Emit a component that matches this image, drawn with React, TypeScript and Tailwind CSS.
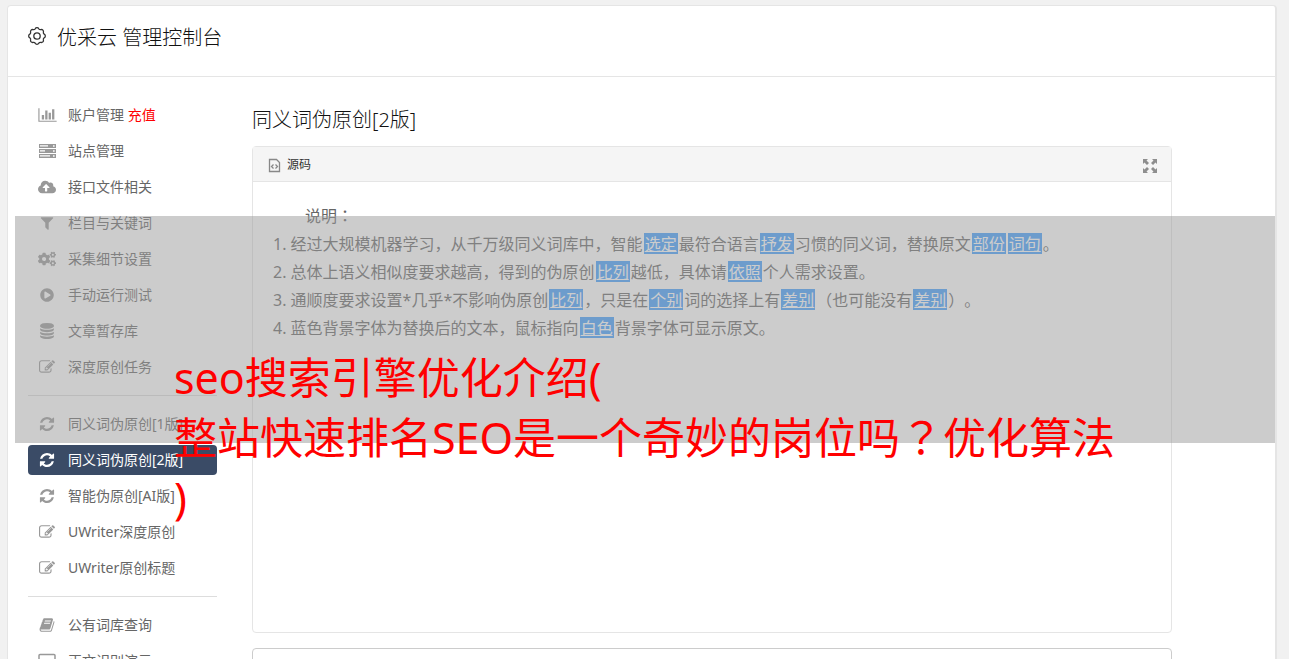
import type { ReactNode } from "react";
import { FaCloudUploadAlt, FaCogs, FaPlayCircle } from "react-icons/fa";

type GlyphProps = {
  viewBox: string;
  d: string;
};

function Glyph({ viewBox, d }: GlyphProps) {
  return (
    <svg viewBox={viewBox} className="size-4" fill="currentColor" aria-hidden="true">
      <path d={d} />
    </svg>
  );
}

const chart = (
  <svg viewBox="0 0 2048 1792" className="h-4 w-[19px]" fill="currentColor" aria-hidden="true">
    <path d="M640 896v512h-256v-512h256zm384-512v1024h-256v-1024h256zm1024 1152v128h-2048v-1536h128v1408h1920zm-640-896v768h-256v-768h256zm384-384v1152h-256v-1152h256z" />
  </svg>
);

const server = (
  <svg viewBox="0 0 17 14" className="h-[14px] w-[17px]" fill="currentColor" aria-hidden="true">
    <path
      fillRule="evenodd"
      d="M0 0h17v4H0zM1 1v.8h8V1zM1 2.4v.6h8v-.6zM14 1.2v1.6h1.6V1.2zM0 5h17v4H0zM1 6v.8h5V6zM1 7.4v.6h5v-.6zM14 6.2v1.6h1.6V6.2zM0 10h17v4H0zM1 11v.8h10V11zM1 12.4v.6h10v-.6zM14 11.2v1.6h1.6v-1.6z"
    />
  </svg>
);

const filter = (
  <Glyph
    viewBox="0 0 1792 1792"
    d="M1595 295q17 41-14 70l-493 493v742q0 42-39 59-13 5-25 5-27 0-45-19l-256-256q-19-19-19-45v-486l-493-493q-31-29-14-70 17-39 59-39h1280q42 0 59 39z"
  />
);

const database = (
  <Glyph
    viewBox="0 0 1792 1792"
    d="M896 768q237 0 443-43t325-127v170q0 69-103 128t-280 93.5-385 34.5-385-34.5-280-93.5-103-128v-170q119 84 325 127t443 43zm0 768q237 0 443-43t325-127v170q0 69-103 128t-280 93.5-385 34.5-385-34.5-280-93.5-103-128v-170q119 84 325 127t443 43zm0-384q237 0 443-43t325-127v170q0 69-103 128t-280 93.5-385 34.5-385-34.5-280-93.5-103-128v-170q119 84 325 127t443 43zm0-1152q208 0 385 34.5t280 93.5 103 128v128q0 69-103 128t-280 93.5-385 34.5-385-34.5-280-93.5-103-128v-128q0-69 103-128t280-93.5 385-34.5z"
  />
);

const edit = (
  <Glyph
    viewBox="0 0 1792 1792"
    d="M888 1184l116-116-152-152-116 116v56h96v96h56zm440-720q-16-16-33 1l-350 350q-17 17-1 33t33-1l350-350q17-17 1-33zm80 594v190q0 119-84.5 203.5t-203.5 84.5h-832q-119 0-203.5-84.5t-84.5-203.5v-832q0-119 84.5-203.5t203.5-84.5h832q63 0 117 25 15 7 18 23 3 17-9 29l-49 49q-14 14-32 8-23-6-45-6h-832q-66 0-113 47t-47 113v832q0 66 47 113t113 47h832q66 0 113-47t47-113v-126q0-13 9-22l64-64q15-15 35-7t20 29zm-96-738l288 288-672 672h-288v-288zm444 132l-92 92-288-288 92-92q28-28 68-28t68 28l152 152q28 28 28 68t-28 68z"
  />
);

const refresh = (
  <Glyph
    viewBox="-100 -100 1736 1736"
    d="M1511 928q0 5-1 7-64 268-268 434.5t-478 166.5q-146 0-282.5-55t-243.5-157l-129 129q-19 19-45 19t-45-19-19-45v-448q0-26 19-45t45-19h448q26 0 45 19t19 45-19 45l-137 137q71 66 161 102t187 36q134 0 250-65t186-179q11-17 53-117 8-23 30-23h192q13 0 22.5 9.5t9.5 22.5zm25-800v448q0 26-19 45t-45 19h-448q-26 0-45-19t-19-45 19-45l138-138q-148-137-349-137-134 0-250 65t-186 179q-11 17-53 117-8 23-30 23h-199q-13 0-22.5-9.5t-9.5-22.5v-7q65-268 270-434.5t480-166.5q146 0 284 55.5t245 156.5l130-129q19-19 45-19t45 19 19 45z"
  />
);

const book = (
  <Glyph
    viewBox="0 0 1792 1792"
    d="M1703 478q40 57 18 129l-275 906q-19 64-76.5 107.5t-122.5 43.5h-923q-77 0-148.5-53.5t-99.5-131.5q-24-67-2-127 0-4 3-27t4-37q1-8-3-21.5t-3-19.5q2-11 8-21t16.5-23.5 16.5-23.5q23-38 45-91.5t30-91.5q3-10 .5-30t-.5-28q3-11 17-28t17-23q21-36 42-92t25-90q1-9-2.5-32t.5-28q4-13 22-30.5t22-22.5q19-26 42.5-84.5t27.5-96.5q1-8-3-25.5t-2-26.5q2-8 9-18t18-23 17-21q8-12 16.5-30.5t15-35 16-36 19.5-32 26.5-23.5 36-11.5 47.5 5.5l-1 3q38-9 51-9h761q74 0 114 56t18 130l-274 906q-36 119-71.5 153.5t-128.5 34.5h-869q-27 0-38 15-11 16-1 43 24 70 144 70h923q29 0 56-15.5t35-41.5l300-987q7-22 5-57 38 15 59 43zm-1064 2q-4 13 2 22.5t20 9.5h608q13 0 25.5-9.5t16.5-22.5l21-64q4-13-2-22.5t-20-9.5h-608q-13 0-25.5 9.5t-16.5 22.5zm-83 256q-4 13 2 22.5t20 9.5h608q13 0 25.5-9.5t16.5-22.5l21-64q4-13-2-22.5t-20-9.5h-608q-13 0-25.5 9.5t-16.5 22.5z"
  />
);

const laptop = (
  <svg viewBox="0 0 18 16" className="h-4 w-[18px]" fill="none" stroke="currentColor" aria-hidden="true">
    <rect x="1" y="1.5" width="16" height="10" rx="1" strokeWidth="1.5" />
    <path d="M0 14h18" strokeWidth="2" />
  </svg>
);

type MenuItem = {
  label: string;
  icon: ReactNode;
  badge?: string;
  active?: boolean;
};

const groups: MenuItem[][] = [
  [
    { label: "账户管理", icon: chart, badge: "充值" },
    { label: "站点管理", icon: server },
    { label: "接口文件相关", icon: <FaCloudUploadAlt className="size-[18px]" /> },
    { label: "栏目与关键词", icon: filter },
    { label: "采集细节设置", icon: <FaCogs className="size-[18px]" /> },
    { label: "手动运行测试", icon: <FaPlayCircle className="size-[14px]" /> },
    { label: "文章暂存库", icon: database },
    { label: "深度原创任务", icon: edit },
  ],
  [
    { label: "同义词伪原创[1版]", icon: refresh },
    { label: "同义词伪原创[2版]", icon: refresh, active: true },
    { label: "智能伪原创[AI版]", icon: refresh },
    { label: "UWriter深度原创", icon: edit },
    { label: "UWriter原创标题", icon: edit },
  ],
  [
    { label: "公有词库查询", icon: book },
    { label: "正文识别演示", icon: laptop },
  ],
];

function MenuLink({ item }: { item: MenuItem }) {
  return (
    <a
      href="#"
      className={
        item.active
          ? "flex h-[30px] items-center gap-[11px] whitespace-nowrap rounded bg-[#3a4b66] pl-[9px] text-white"
          : "flex h-[30px] items-center gap-[11px] whitespace-nowrap rounded pl-[9px] text-[#666]"
      }
    >
      <span className={item.active ? "flex w-5 justify-center text-white" : "flex w-5 justify-center text-[#999]"}>
        {item.icon}
      </span>
      <span>
        {item.label}
        {item.badge ? <span className="text-[#f00]"> {item.badge}</span> : null}
      </span>
    </a>
  );
}

function Swap({ children }: { children: string }) {
  return <u className="mx-px inline-block h-[21px] bg-[#409eff] px-px leading-[23px] text-white">{children}</u>;
}

// Full-width marks drawn in the middle of their cell
function Mark({ children }: { children: string }) {
  return (
    <span className="font-['Noto_Sans_CJK_JP',sans-serif] leading-none" lang="ja">
      {children}
    </span>
  );
}

export default function App() {
  return (
    <div className="relative h-screen overflow-hidden bg-[#f1f1f1] pt-[5px] pr-3 pl-[7px] font-['Noto_Sans','Noto_Sans_CJK_SC',sans-serif] text-sm text-[#333] [text-spacing-trim:space-all]">
      <div className="min-h-full rounded-t border border-r-2 border-[#e5e5e5] bg-white">
        <header className="flex h-[71px] items-start gap-2.5 border-b border-[#e5e5e5] pt-4 pl-[19px]">
          <svg viewBox="0 0 20 20" className="mt-1 size-5" fill="none" stroke="#333" strokeWidth="1.3" aria-hidden="true">
            <circle cx="10" cy="10" r="3.2" />
            <path d="M8.2 2.8a2 2 0 0 1 3.6 0a2 2 0 0 0 2.1.8a2 2 0 0 1 2.5 2.5a2 2 0 0 0 .8 2.1a2 2 0 0 1 0 3.6a2 2 0 0 0-.8 2.1a2 2 0 0 1-2.5 2.5a2 2 0 0 0-2.1.8a2 2 0 0 1-3.6 0a2 2 0 0 0-2.1-.8a2 2 0 0 1-2.5-2.5a2 2 0 0 0-.8-2.1a2 2 0 0 1 0-3.6a2 2 0 0 0 .8-2.1a2 2 0 0 1 2.5-2.5a2 2 0 0 0 2.1-.8z" />
          </svg>
          <h1 className="text-xl leading-8 font-light text-[#111]">优采云 管理控制台</h1>
        </header>

        <div className="flex gap-[35px] pt-[23px] pl-5">
          <nav className="w-[189px] shrink-0">
            {groups.map((group, index) => (
              <ul
                key={group[0].label}
                className={index > 0 ? "mt-[13px] space-y-1.5 border-t border-[#ddd] pt-[13px]" : "space-y-1.5"}
              >
                {group.map((item) => (
                  <li key={item.label}>
                    <MenuLink item={item} />
                  </li>
                ))}
              </ul>
            ))}
          </nav>

          <main className="mr-[103px] min-w-0 flex-1">
            <h2 className="pt-1 text-xl leading-8 font-light text-[#111]">同义词伪原创[2版]</h2>
            <section className="mt-2.5 rounded border border-[#e5e5e5]">
              <div className="flex h-[35px] items-center gap-1.5 border-b border-[#e5e5e5] bg-[#f5f5f5] pt-0.5 pr-3.5 pl-[15px] text-xs">
                <svg viewBox="0 0 13 16" className="h-4 w-[13px]" fill="none" stroke="#888" strokeWidth="1.3" aria-hidden="true">
                  <path d="M1.5 2.5h7l3 3v9h-10z" />
                  <path d="M5.5 7.5l-2 2 2 2M7.5 7.5l2 2-2 2" />
                </svg>
                <span className="grow">源码</span>
                <button type="button" aria-label="全屏">
                  <svg viewBox="0 0 14 14" className="mt-0.5 size-[14px]" fill="#8e8e8e" aria-hidden="true">
                    <path d="M0 0h5L3.5 1.5l2.5 2.5-2 2-2.5-2.5L0 5zM14 0v5l-1.5-1.5L10 6 8 4l2.5-2.5L9 0zM0 14V9l1.5 1.5L4 8l2 2-2.5 2.5L5 14zM14 14H9l1.5-1.5L8 10l2-2 2.5 2.5L14 9z" />
                  </svg>
                </button>
              </div>
              <div className="min-h-[450px] pt-5 pl-5 text-base leading-7 text-[#666]">
                <p className="pl-8">
                  说明<Mark>：</Mark>
                </p>
                <ol className="list-inside list-decimal">
                  <li>
                    经过大规模机器学习，从千万级同义词库中，智能<Swap>选定</Swap>最符合语言<Swap>抒发</Swap>
                    习惯的同义词，替换原文<Swap>部份</Swap><Swap>词句</Swap>。
                  </li>
                  <li>
                    总体上语义相似度要求越高，得到的伪原创<Swap>比列</Swap>越低，具体请<Swap>依照</Swap>
                    个人需求设置。
                  </li>
                  <li>
                    通顺度要求设置*几乎*不影响伪原创<Swap>比列</Swap>，只是在<Swap>个别</Swap>词的选择上有
                    <Swap>差别</Swap>（也可能没有<Swap>差别</Swap>）。
                  </li>
                  <li>
                    蓝色背景字体为替换后的文本，鼠标指向<Swap>白色</Swap>背景字体可显示原文。
                  </li>
                </ol>
              </div>
            </section>
            <textarea
              aria-label="文本"
              className="mt-[15px] block h-24 w-full resize-none rounded border border-[#ccc]"
            />
          </main>
        </div>
      </div>

      <div className="pointer-events-none absolute top-[216px] right-[14px] left-[15px] h-[227px] bg-[#999]/50" />
      <p className="pointer-events-none absolute top-[348px] left-[174px] text-[43px] leading-[60px] whitespace-nowrap text-[#f00]">
        seo搜索引擎优化介绍(
        <br />
        整站快速排名SEO是一个奇妙的岗位吗<Mark>？</Mark>优化算法
        <br />)
      </p>
    </div>
  );
}
